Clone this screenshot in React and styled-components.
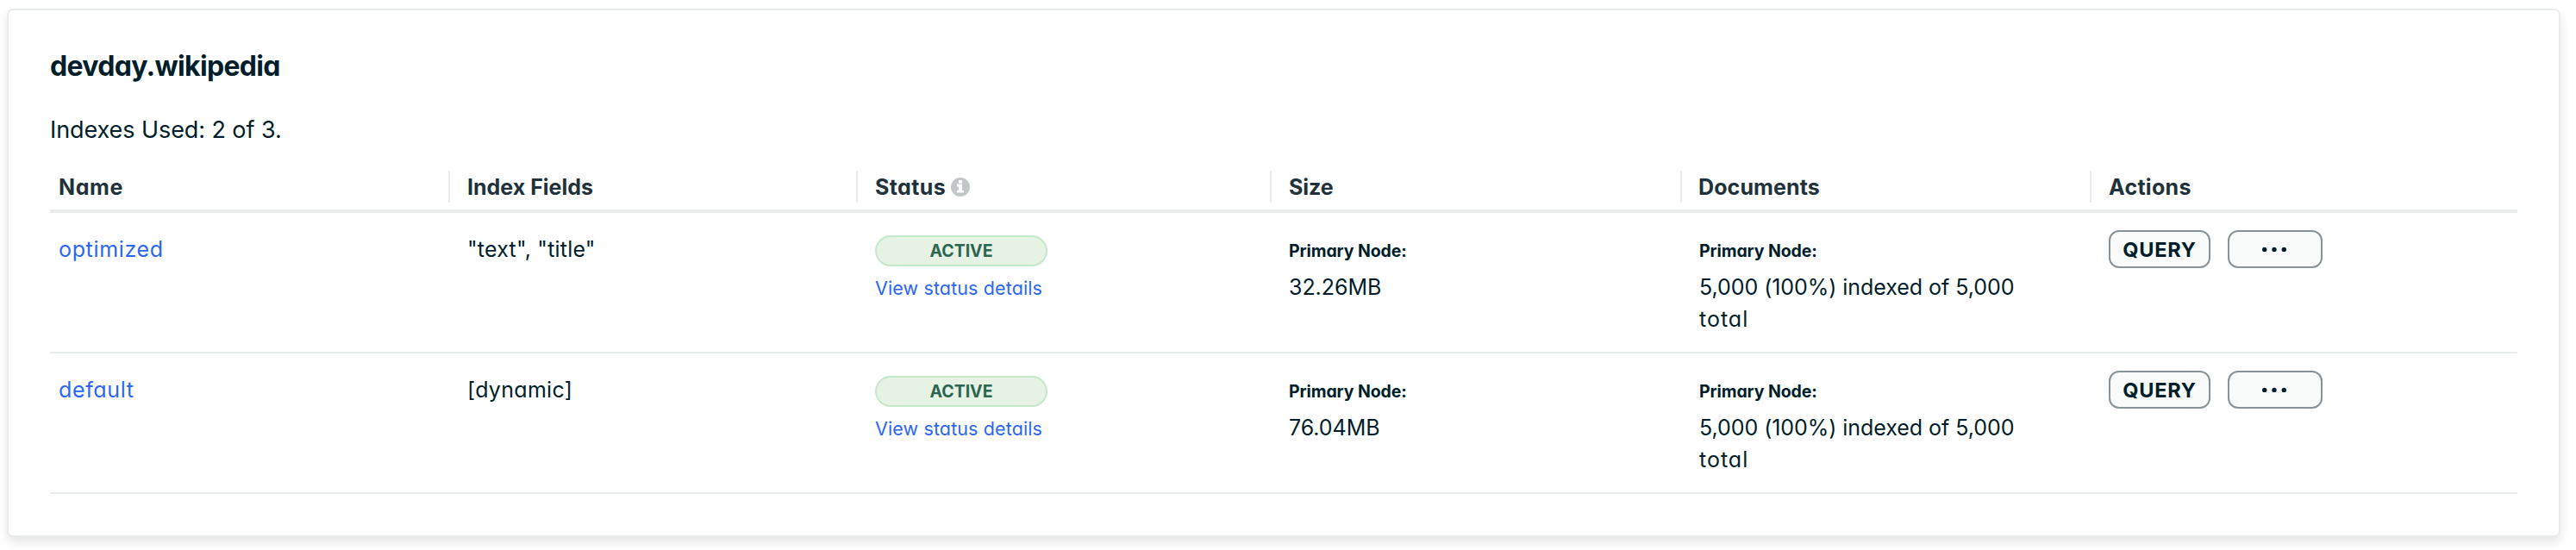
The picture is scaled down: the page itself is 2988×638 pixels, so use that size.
import React from "react";
import styled, { createGlobalStyle } from "styled-components";

const GlobalStyle = createGlobalStyle`
  * { box-sizing: border-box; }
  body {
    margin: 0;
    background: #fff;
    color: #001e2b;
    font-family: Inter, "Liberation Sans", sans-serif;
    font-feature-settings: "cv11";
    font-size: 25px;
  }
`;

const Page = styled.main`
  height: 638px;
  padding: 10px 18px 15px 8px;
  overflow: hidden;
`;

const Card = styled.section`
  height: 613px;
  padding: 46px 48px;
  border: 2px solid #e8edeb;
  border-radius: 7px;
  background: #fff;
  box-shadow: 0 6px 12px rgba(0, 0, 0, 0.1);
`;

const Title = styled.h2`
  margin: 0;
  font-size: 32px;
  font-weight: 700;
  line-height: 38px;
  letter-spacing: -0.68px;
`;

const Usage = styled.p`
  margin: 36px 0 0;
  font-size: 27px;
  line-height: 38px;
  letter-spacing: -0.08px;
`;

const Table = styled.div`
  margin-top: 28px;
`;

const Row = styled.div`
  display: grid;
  grid-template-columns: 462px 473px 480px 476px 475px 1fr;
`;

const HeaderRow = styled(Row)`
  padding-bottom: 8px;
  border-bottom: 4px solid #e8edeb;
`;

const BodyRow = styled(Row)`
  height: 163px;
  padding-top: 20px;
  border-bottom: 2px solid #e8edeb;
`;

const HeaderCell = styled.div`
  display: flex;
  align-items: center;
  gap: 6px;
  height: 37px;
  padding-left: ${(p) => p.$pad - 2}px;
  border-left: 2px solid ${(p) => (p.$divider ? "#e8edeb" : "transparent")};
  color: #21313c;
  font-weight: 700;
  letter-spacing: ${(p) => p.$track}px;
`;

const Cell = styled.div`
  padding-left: ${(p) => p.$pad}px;
`;

const Text = styled.div`
  line-height: 44px;
  letter-spacing: ${(p) => p.$track}px;
`;

const NameLink = styled.a`
  display: block;
  color: #2b66f6;
  line-height: 44px;
  letter-spacing: 0.65px;
`;

const Pill = styled.div`
  width: 200px;
  height: 36px;
  margin-top: 6px;
  border: 2px solid #c5e8cb;
  border-radius: 18px;
  background: #e6f2e4;
  color: #2b6650;
  font-size: 19.5px;
  font-weight: 700;
  line-height: 32px;
  text-align: center;
`;

const DetailsLink = styled.a`
  display: block;
  margin-top: 9px;
  color: #2b66f6;
  font-size: 21.5px;
  line-height: 32px;
  letter-spacing: 0.12px;
`;

const NodeLabel = styled.div`
  margin-top: 9px;
  font-size: 19.5px;
  font-weight: 700;
  line-height: 30px;
  letter-spacing: -0.1px;
`;

const Value = styled.div`
  width: 400px;
  margin-top: 9px;
  line-height: 37px;
  letter-spacing: -0.05px;
`;

const Spaced = styled.span`
  letter-spacing: 1px;
`;

const Actions = styled.div`
  display: flex;
  gap: 20px;
`;

const Button = styled.button`
  display: flex;
  align-items: center;
  justify-content: center;
  width: ${(p) => p.$width}px;
  height: 44px;
  padding: 0;
  border: 2px solid #889397;
  border-radius: 12px;
  background: #f9fbfa;
  color: #001e2b;
  font: 700 23.5px Inter, "Liberation Sans", sans-serif;
  letter-spacing: 0.8px;
`;

const InfoIcon = () => (
  <svg width="22" height="22" viewBox="0 0 22 22">
    <circle cx="11" cy="11" r="11" fill="#c1c7c6" />
    <path d="M9 3h4v3.4H9zM7 7.6h6v7.2h2v2.8H7v-2.8h2v-4.4H7z" fill="#fff" />
  </svg>
);

const Dots = () => (
  <svg width="30" height="8" viewBox="0 0 30 8">
    {[2.7, 14, 25.3].map((x) => (
      <circle key={x} cx={x} cy="4.4" r="2.7" fill="#001e2b" />
    ))}
  </svg>
);

const columns = [
  { label: "Name", pad: 10, track: 0.6 },
  { label: "Index Fields", pad: 22, track: 0 },
  { label: "Status", pad: 22, track: 0.4, info: true },
  { label: "Size", pad: 22, track: -0.1 },
  { label: "Documents", pad: 21, track: 0.1 },
  { label: "Actions", pad: 22, track: 0.3 },
];

const indexes = [
  { name: "optimized", fields: '"text", "title"', track: 0.2, size: "32.26MB" },
  { name: "default", fields: "[dynamic]", track: 0.3, size: "76.04MB" },
];

export default function App() {
  return (
    <>
      <GlobalStyle />
      <Page>
        <Card>
          <Title>devday.wikipedia</Title>
          <Usage>Indexes Used: 2 of 3.</Usage>
          <Table>
            <HeaderRow>
              {columns.map((c, i) => (
                <HeaderCell key={c.label} $pad={c.pad} $track={c.track} $divider={i > 0}>
                  {c.label}
                  {c.info && <InfoIcon />}
                </HeaderCell>
              ))}
            </HeaderRow>
            {indexes.map((row) => (
              <BodyRow key={row.name}>
                <Cell $pad={10}>
                  <NameLink>{row.name}</NameLink>
                </Cell>
                <Cell $pad={22}>
                  <Text $track={row.track}>{row.fields}</Text>
                </Cell>
                <Cell $pad={22}>
                  <Pill>ACTIVE</Pill>
                  <DetailsLink>View status details</DetailsLink>
                </Cell>
                <Cell $pad={22}>
                  <NodeLabel>Primary Node:</NodeLabel>
                  <Value>{row.size}</Value>
                </Cell>
                <Cell $pad={22}>
                  <NodeLabel>Primary Node:</NodeLabel>
                  <Value>
                    5,000 (100%) indexed of 5,000 <Spaced>total</Spaced>
                  </Value>
                </Cell>
                <Cell $pad={22}>
                  <Actions>
                    <Button $width={118}>QUERY</Button>
                    <Button $width={110} aria-label="More actions">
                      <Dots />
                    </Button>
                  </Actions>
                </Cell>
              </BodyRow>
            ))}
          </Table>
        </Card>
      </Page>
    </>
  );
}
